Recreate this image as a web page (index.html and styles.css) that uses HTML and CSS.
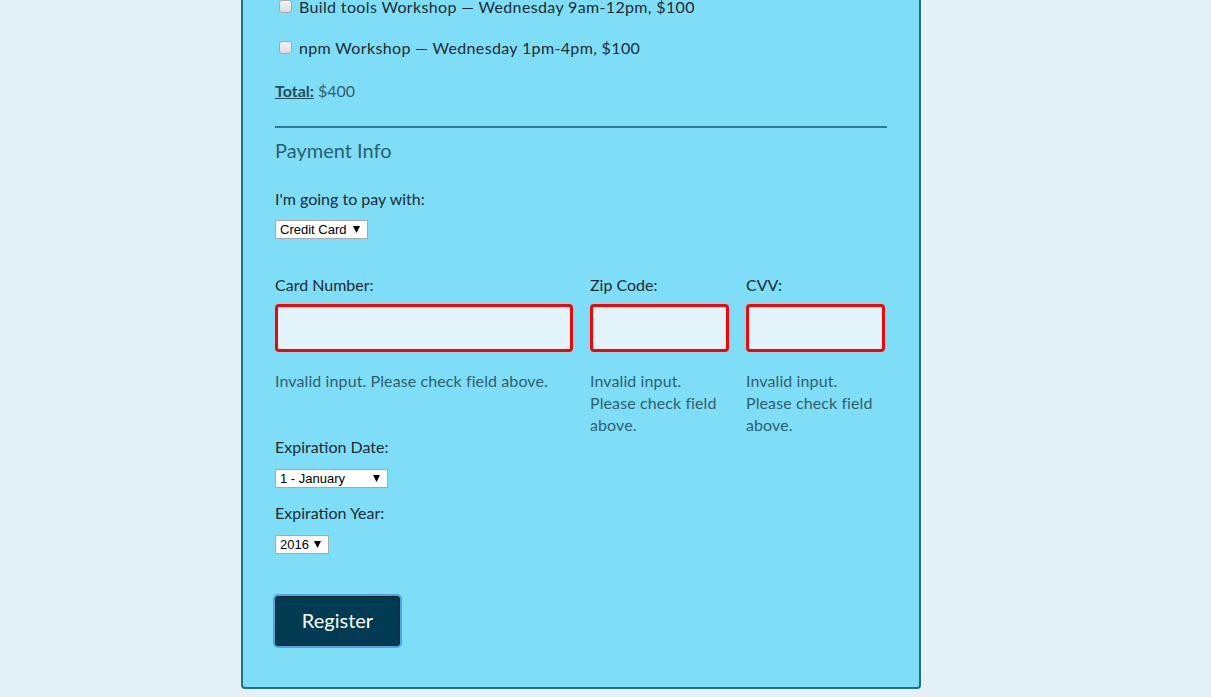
FILE: index.html
```html
<!DOCTYPE html>
<html lang="en">
<head>
<meta charset="utf-8">
<title>Register</title>
<link rel="stylesheet" href="styles.css">
</head>
<body>
<form class="card">
  <label class="activity"><input type="checkbox" class="check"> <span>Build tools Workshop — Wednesday 9am-12pm, $100</span></label>
  <label class="activity activity--last"><input type="checkbox" class="check"> <span>npm Workshop — Wednesday 1pm-4pm, $100</span></label>
  <p class="total"><span class="total-label">Total:</span> $400</p>

  <div class="payment">
    <h2 class="legend">Payment Info</h2>
    <label class="label label--pay">I'm going to pay with:</label>
    <select class="select select--pay"><option>Credit Card</option></select>

    <div class="cc-grid">
      <div class="cc-col">
        <label class="label">Card Number:</label>
        <input class="field field--invalid" type="text">
        <p class="error">Invalid input. Please check field above.</p>
      </div>
      <div class="cc-col">
        <label class="label">Zip Code:</label>
        <input class="field field--invalid" type="text">
        <p class="error">Invalid input. Please check field above.</p>
      </div>
      <div class="cc-col">
        <label class="label">CVV:</label>
        <input class="field field--invalid" type="text">
        <p class="error">Invalid input. Please check field above.</p>
      </div>
    </div>

    <label class="label">Expiration Date:</label>
    <select class="select select--month"><option>1 - January</option></select>
    <label class="label label--year">Expiration Year:</label>
    <select class="select select--year"><option>2016</option></select>
  </div>

  <button class="register" type="button">Register</button>
</form>
</body>
</html>
```
FILE: styles.css
```css
html, body {
  margin: 0;
  padding: 0;
}
body {
  background: #e3f1f7;
  font-family: Lato, "Open Sans", "Noto Sans", sans-serif;
  font-size: 16px;
  color: #1b2b31;
  overflow: hidden;
  height: 697px;
}
.card {
  box-sizing: border-box;
  width: 680px;
  margin: -30px 0 0 241px;
  padding: 24px 32px 41px;
  background: #7fdef7;
  border: 2px solid #20708a;
  border-radius: 4px;
  display: flex;
  flex-direction: column;
  align-items: flex-start;
}
.activity {
  display: flex;
  align-items: center;
  height: 22px;
  line-height: 22px;
  margin-bottom: 19px;
  padding-left: 4px;
  letter-spacing: 0.35px;
}
.activity--last {
  margin-bottom: 21px;
}
.check {
  appearance: none;
  -webkit-appearance: none;
  box-sizing: border-box;
  width: 13px;
  height: 13px;
  margin: -2px 7px 0 0;
  border: 1px solid #a8a8a8;
  border-radius: 3px;
  background: linear-gradient(#f4f4f4, #dcdcdc);
}
.total {
  margin: 0;
  line-height: 22px;
  color: #32606f;
}
.total-label {
  font-weight: bold;
  text-decoration: underline;
  color: #1f4b5a;
}
.payment {
  align-self: stretch;
  margin-top: 24px;
  border-top: 2px solid #2a7c95;
  display: flex;
  flex-direction: column;
  align-items: flex-start;
}
.legend {
  margin: 8px 0 0;
  font-size: 20px;
  font-weight: normal;
  line-height: 28px;
  color: #2a5f71;
}
.label {
  display: block;
  line-height: 22px;
  color: #1b2b31;
}
.label--pay {
  margin-top: 24px;
}
.select {
  appearance: none;
  -webkit-appearance: none;
  box-sizing: border-box;
  height: 19px;
  margin: 10px 0 0;
  padding: 0 0 0 4px;
  border: 1px solid #a9a9a9;
  border-radius: 0;
  background: #fff url("data:image/svg+xml,%3Csvg xmlns='http://www.w3.org/2000/svg' width='7' height='7'%3E%3Cpath d='M0 0h7L3.5 7z' fill='%23000'/%3E%3C/svg%3E") no-repeat right 7px center;
  font-family: "Liberation Sans", Arial, sans-serif;
  font-size: 13px;
  line-height: 17px;
  color: #000;
}
.select--pay { width: 93px; }
.select--month { width: 113px; margin-top: 11px; }
.select--year { width: 54px; margin-top: 11px; }
.label--year { margin-top: 14px; }
.cc-grid {
  display: grid;
  grid-template-columns: 298px 139px 139px;
  column-gap: 17px;
  margin-top: 35px;
}
.cc-col {
  display: flex;
  flex-direction: column;
}
.field {
  box-sizing: border-box;
  width: 100%;
  height: 48px;
  margin-top: 8px;
  border: 3px solid #ff0000;
  border-radius: 4px;
  background: #e2f4f9;
  font: inherit;
  outline: none;
}
.error {
  margin: 18px 0 0;
  line-height: 22px;
  color: #2f5e6d;
  letter-spacing: 0.1px;
}
.register {
  box-sizing: border-box;
  width: 125px;
  height: 50px;
  margin-top: 42px;
  padding-bottom: 3px;
  border: 1px solid #0a1d24;
  border-radius: 3px;
  background: #003b51;
  color: #fff;
  font-family: inherit;
  font-size: 20px;
  box-shadow: 0 0 0 2px #4aa8e6;
}
```
